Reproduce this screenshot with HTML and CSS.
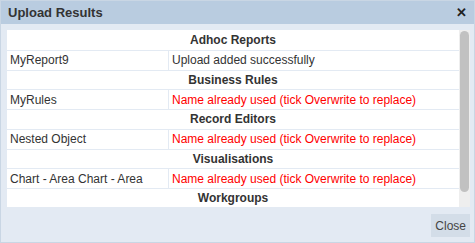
FILE: index.html
```html
<!DOCTYPE html>
<html lang="en">
<head>
    <meta charset="UTF-8">
    <title>Upload Results</title>
    <link rel="stylesheet" href="styles.css">
</head>
<body>

<div class="dialog">
    <div class="dialog-title">
        <span>Upload Results</span>
        <span class="close-x">&#x2715;</span>
    </div>
    <div class="dialog-body">
        <div class="results">
            <table class="results-table">
                <tr><th colspan="2">Adhoc Reports</th></tr>
                <tr><td class="name">MyReport9</td><td>Upload added successfully</td></tr>
                <tr><th colspan="2">Business Rules</th></tr>
                <tr><td class="name">MyRules</td><td class="error">Name already used (tick Overwrite to replace)</td></tr>
                <tr><th colspan="2">Record Editors</th></tr>
                <tr><td class="name">Nested Object</td><td class="error">Name already used (tick Overwrite to replace)</td></tr>
                <tr><th colspan="2">Visualisations</th></tr>
                <tr><td class="name">Chart - Area Chart - Area</td><td class="error">Name already used (tick Overwrite to replace)</td></tr>
                <tr><th colspan="2">Workgroups</th></tr>
            </table>
        </div>
        <!-- scrollbars are hidden in the renderer, so draw one -->
        <div class="scroll-track"><div class="scroll-thumb"></div></div>
    </div>
    <div class="dialog-footer">
        <button type="button">Close</button>
    </div>
</div>

</body>
</html>
```

FILE: styles.css
```css
body {
    margin: 0;
    font-family: "Liberation Sans", Arial, sans-serif;
    font-size: 12px;
    color: #333;
}
.dialog {
    width: 475px;
    height: 243px;
    box-sizing: border-box;
    border: 1px solid #c9d6e4;
    background-color: #e3eaf3;
    display: flex;
    flex-direction: column;
}
.dialog-title {
    height: 23px;
    background-color: #b9cce0;
    display: flex;
    align-items: center;
    justify-content: space-between;
    padding: 0 7px;
    font-weight: bold;
    font-size: 13px;
    color: #333;
}
.close-x {
    font-size: 13px;
    font-weight: bold;
    color: #222;
}
.dialog-body {
    display: flex;
    height: 177px;
    margin: 6px 4px 0 6px;
}
.results {
    flex: 1;
    overflow: hidden;
    background-color: #fff;
    padding-top: 1px;
}
.scroll-track {
    width: 11px;
    background-color: #eeeeee;
    padding: 1px 1px 0 1px;
    box-sizing: border-box;
}
.scroll-thumb {
    height: 161px;
    background-color: #c1c1c1;
    border-radius: 5px;
}
.results-table {
    width: 100%;
    border-collapse: collapse;
}
.results-table th,
.results-table td {
    height: 18.75px;
    padding: 0 3px;
    border-bottom: 1px solid #e3eaf3;
    line-height: 18px;
    text-align: left;
    white-space: nowrap;
}
.results-table th {
    text-align: center;
    font-weight: bold;
}
.results-table td.name {
    width: 155px;
    border-right: 1px solid #e3eaf3;
}
.results-table td.error {
    color: #f00;
}
.dialog-footer {
    display: flex;
    justify-content: flex-end;
    padding: 7px 4px 0 0;
}
.dialog-footer button {
    font-family: inherit;
    font-size: 12px;
    color: #444;
    background-color: #d3dde8;
    border: none;
    height: 23px;
    padding: 0 4px;
}
```
